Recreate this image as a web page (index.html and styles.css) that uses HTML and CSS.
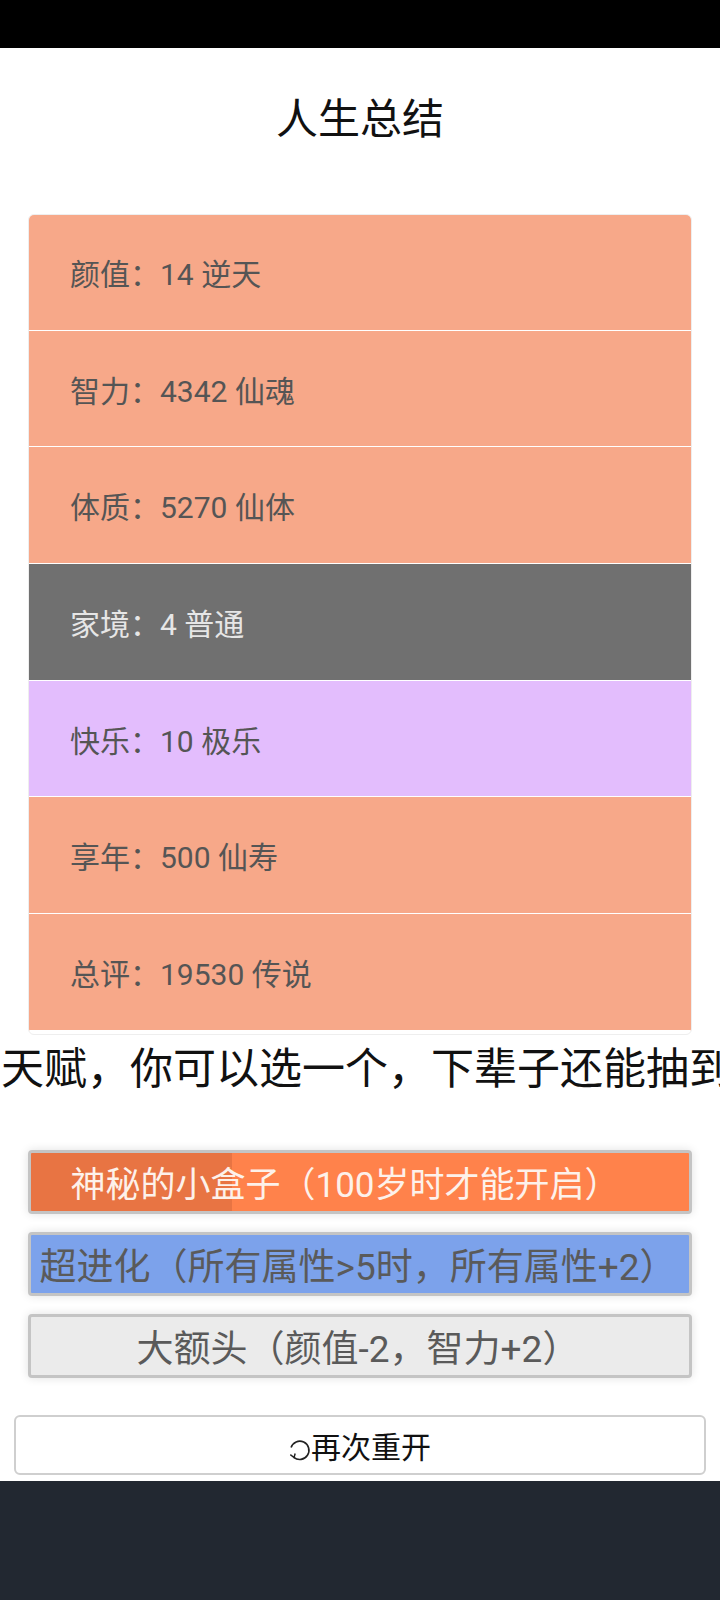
FILE: index.html
```html
<!DOCTYPE html>
<html lang="zh-CN">
<head>
    <meta charset="UTF-8">
    <meta name="viewport" content="width=device-width, initial-scale=1.0">
    <title>人生总结</title>
    <link rel="stylesheet" href="styles.css">
</head>
<body>
    <div class="status-bar"></div>
    <div class="page">
        <h1 class="title">人生总结</h1>
        <ul class="summary">
            <li class="item rare">颜值：14 逆天</li>
            <li class="item rare">智力：4342 仙魂</li>
            <li class="item rare">体质：5270 仙体</li>
            <li class="item common">家境：4 普通</li>
            <li class="item epic">快乐：10 极乐</li>
            <li class="item rare">享年：500 仙寿</li>
            <li class="item rare">总评：19530 传说</li>
        </ul>
        <div class="hint"><span>天赋，你可以选一个，下辈子还能抽到</span></div>
        <ul class="talents">
            <li class="talent orange"><span>神秘的小盒子（100岁时才能开启）</span></li>
            <li class="talent blue"><span>超进化（所有属性&gt;5时，所有属性+2）</span></li>
            <li class="talent grey"><span>大额头（颜值-2，智力+2）</span></li>
        </ul>
        <button class="restart">
            <svg class="restart-icon" width="22" height="22" viewBox="0 0 20 20">
                <path d="M4.4 16.6 A8.3 8.3 0 1 0 1.9 7.8" fill="none" stroke="#222" stroke-width="1.5"/>
                <path d="M1.2 14.2 L4.6 16.8 L5.6 13.2" fill="none" stroke="#222" stroke-width="1.3"/>
            </svg>再次重开
        </button>
    </div>
    <div class="footer"></div>
</body>
</html>
```

FILE: styles.css
```css
body {
    margin: 0;
    min-height: 100vh;
    display: flex;
    flex-direction: column;
    background-color: #fff;
    font-family: Roboto, "Noto Sans CJK SC", sans-serif;
    overflow-x: hidden;
}
.status-bar {
    height: 48px;
    flex-shrink: 0;
    background-color: #000;
}
.page {
    padding-top: 48px;
}
.title {
    margin: 0;
    font-size: 42px;
    font-weight: normal;
    line-height: 48px;
    text-align: center;
    color: #111;
}
.summary {
    list-style: none;
    margin: 70px 28px 0 28px;
    padding: 0 0 3px 0;
    border: 1px solid #eee;
    border-radius: 6px;
    overflow: hidden;
}
.item {
    height: 115.7px;
    display: flex;
    align-items: center;
    padding: 0 41px;
    font-size: 30px;
    color: #555;
    border-bottom: 1px solid #fff;
}
.item:first-child {
    height: 114.7px;
}
.rare {
    background-color: #f7a889;
}
.common {
    background-color: #707070;
    color: #e6e6e6;
}
.epic {
    background-color: #e3bdfd;
}
.hint {
    margin-top: 8px;
    height: 52px;
    line-height: 52px;
    white-space: nowrap;
    font-size: 43px;
    color: #111;
    padding-left: 1px;
}
.talents {
    list-style: none;
    margin: 55px 28px 0 28px;
    padding: 0;
    display: flex;
    flex-direction: column;
    gap: 18px;
}
.talent {
    height: 58px;
    border: 3px solid #c4c4c4;
    border-radius: 4px;
    box-shadow: 0 0 10px rgba(0, 0, 0, 0.12);
    display: flex;
    align-items: center;
    justify-content: center;
    padding-right: 4px;
    font-size: 37px;
    color: #5a5a5a;
    white-space: nowrap;
}
.orange {
    background: linear-gradient(to right, #e87443 0, #e87443 201px, #ff824b 201px);
    color: #fdf1ea;
    font-size: 35px;
    padding-right: 30px;
}
.blue {
    background-color: #7ca2eb;
}
.grey {
    background-color: #ebebeb;
}
.restart {
    display: flex;
    align-items: center;
    justify-content: center;
    width: 692px;
    height: 60px;
    margin: 37px 0 6px 14px;
    background-color: #fff;
    border: 2px solid #cfcfcf;
    border-radius: 6px;
    font-family: "Noto Sans CJK SC", sans-serif;
    font-size: 30px;
    color: #111;
    padding: 0;
}
.restart-icon {
    margin-top: 10px;
}
.footer {
    flex: 1;
    background-color: #222831;
}
```
